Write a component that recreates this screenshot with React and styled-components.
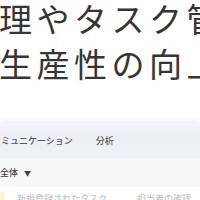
import React from "react";
import styled, { createGlobalStyle } from "styled-components";

const Global = createGlobalStyle`
  html, body { margin: 0; padding: 0; background: #ffffff; }
  body { width: 200px; height: 200px; overflow: hidden; font-family: "Noto Sans CJK JP", "Noto Sans", sans-serif; }
`;

const Page = styled.div`
  width: 200px;
  height: 200px;
  overflow: hidden;
`;

const Hero = styled.h1`
  margin: -4px 0 0 -1px;
  height: 90px;
  font-size: 33px;
  line-height: 45px;
  font-weight: 400;
  letter-spacing: 4.5px;
  color: #353535;
  white-space: nowrap;
`;

const HeroLine = styled.div``;

const Spacer = styled.div`
  height: ${(p) => p.$h}px;
`;

const TabBar = styled.div`
  height: 35px;
  display: flex;
  align-items: center;
  gap: 23px;
  padding-left: 1px;
  background: linear-gradient(#f3f5f9 0%, #eceff5 30%, #eef1f6 100%);
  box-shadow: 0 -3px 4px rgba(210, 216, 228, 0.35);
`;

const Tab = styled.span`
  font-size: 9px;
  line-height: 12px;
  font-weight: 500;
  color: #555a62;
  white-space: nowrap;
`;

const FilterRow = styled.div`
  height: 29px;
  display: flex;
  align-items: center;
  gap: 6px;
  background: #f6f7f9;
`;

const FilterLabel = styled.span`
  font-size: 9px;
  line-height: 12px;
  font-weight: 500;
  color: #444;
`;

const Caret = styled.span`
  font-size: 7px;
  line-height: 12px;
  color: #444;
`;

const ListRow = styled.div`
  display: flex;
  align-items: flex-start;
  padding-top: 6px;
  gap: 12px;
`;

const Mark = styled.span`
  width: 5px;
  height: 10px;
  background: #fbf3d0;
  flex: none;
`;

const Faded = styled.span`
  font-size: 9px;
  line-height: 12px;
  color: #b9bcc2;
  white-space: nowrap;
  margin-left: ${(p) => p.$ml || 0}px;
`;

export default function App() {
  return (
    <Page>
      <Global />
      <Hero>
        <HeroLine>理やタスク管</HeroLine>
        <HeroLine>生産性の向上</HeroLine>
      </Hero>
      <Spacer $h={37} />
      <TabBar>
        <Tab>ミュニケーション</Tab>
        <Tab>分析</Tab>
      </TabBar>
      <FilterRow>
        <FilterLabel>全体</FilterLabel>
        <Caret>▼</Caret>
      </FilterRow>
      <ListRow>
        <Mark />
        <Faded>新規登録されたタスク</Faded>
        <Faded $ml={18}>担当者の確認</Faded>
      </ListRow>
    </Page>
  );
}
